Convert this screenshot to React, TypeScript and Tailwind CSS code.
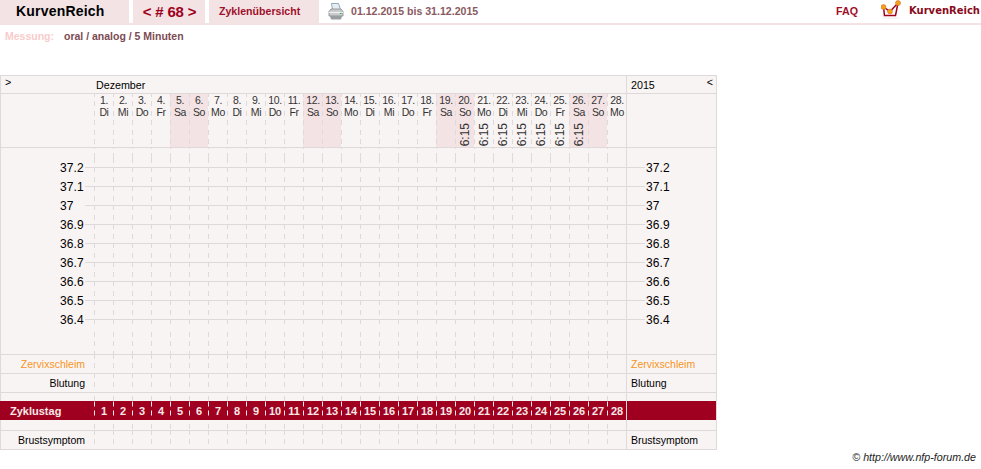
const DAYS = ['Di', 'Mi', 'Do', 'Fr', 'Sa', 'So', 'Mo']
const TEMPS = ['37.2', '37.1', '37', '36.9', '36.8', '36.7', '36.6', '36.5', '36.4']
const nums = Array.from({ length: 28 }, (_, i) => i + 1)

const isPink = (n: number) => n % 7 === 5 || n % 7 === 6 || n === 19 || n === 20
const hasTime = (n: number) => n >= 20 && n <= 26

const rowGrid = 'grid grid-cols-[94px_repeat(28,19px)_91px]'
const line = 'border-[#dedada]'
// 1px wide dash pattern, same length every 19px so the rows line up
const dash = 'bg-[linear-gradient(#dedada_5px,transparent_5px,transparent_9px,#dedada_9px,#dedada_14px,transparent_14px)] bg-[length:1px_19px] bg-repeat-y bg-left'
const dashLight = 'bg-[linear-gradient(#f8e8e8_5px,transparent_5px,transparent_9px,#f8e8e8_9px,#f8e8e8_14px,transparent_14px)] bg-[length:1px_19px] bg-repeat-y bg-left'

function DayCells() {
  return (
    <>
      {nums.map(n => <div key={n} className={dash} />)}
    </>
  )
}

function Spacer({ height }: { height: string }) {
  return (
    <div className={`${rowGrid} ${height}`}>
      <div />
      <DayCells />
      <div className={`border-l ${line}`} />
    </div>
  )
}

function SideRow({ label, color, height }: { label: string; color: string; height: string }) {
  return (
    <div className={`${rowGrid} ${height} text-[10.5px] leading-[18px] ${color}`}>
      <div className="pr-[9px] text-right">{label}</div>
      <DayCells />
      <div className={`border-l ${line} pl-[4px]`}>{label}</div>
    </div>
  )
}

function Divider() {
  return <div className={`border-b ${line}`} />
}

function TempRow({ t }: { t: string }) {
  return (
    <div className={`${rowGrid} h-[19px] items-stretch text-[12px] leading-[14px]`}>
      <div className="flex items-center pl-[60px]">
        <span className="w-[25px] pt-px tracking-[0.1px]">{t}</span>
        <span className="h-px flex-1 bg-[#dedada]" />
      </div>
      {nums.map(n => (
        <div key={n} className={`${dash} flex items-center`}>
          <span className="h-px flex-1 bg-[#dedada]" />
        </div>
      ))}
      <div className={`flex items-center border-l ${line}`}>
        <span className="h-px w-[18px] bg-[#dedada]" />
        <span className="ml-px pt-px tracking-[0.1px]">{t}</span>
      </div>
    </div>
  )
}

function Logo() {
  return (
    <svg width="24" height="20" viewBox="0 0 24 20" className="mr-[4px]">
      <path d="M2 12v6M8 17v2M14 17v2M2 18h16" fill="none" stroke="#eeeeee" strokeWidth="1" />
      <path d="M2.500 7 L3.500 15.500 H14.500 L17 3" fill="none" stroke="#a00020" strokeWidth="1.500" />
      <path d="M2.500 7 L9 11.500 L17 3" fill="none" stroke="#a00020" strokeWidth="1.500" />
      <circle cx="2.500" cy="7" r="2.500" fill="#f7a11a" stroke="#c8602a" strokeWidth="0.5" />
      <circle cx="9" cy="11.500" r="2.500" fill="#f7a11a" stroke="#c8602a" strokeWidth="0.5" />
      <circle cx="17" cy="3" r="2.500" fill="#f7a11a" stroke="#c8602a" strokeWidth="0.5" />
    </svg>
  )
}

function Printer() {
  return (
    <svg width="16" height="17" viewBox="0 0 16 17">
      <path d="M3.500 0.500h7l2 6h-8z" fill="#e6eef5" stroke="#7d95a8" strokeWidth="0.8" />
      <path d="M1 8.500l2-2.500h10l2 2.500v4.500H1z" fill="#c9cccf" stroke="#85888b" strokeWidth="0.8" />
      <path d="M1 9.500h14" stroke="#f2f2f2" strokeWidth="1" />
      <path d="M2 13h12l-1 3.500H3z" fill="#9a9da0" />
      <rect x="12" y="9.800" width="1.800" height="1" fill="#4caf50" />
    </svg>
  )
}

export default function App() {
  return (
    <div className="h-[469px] w-[981px] overflow-hidden bg-white font-['Liberation_Sans',Arial,sans-serif] text-[10.7px] leading-[13px] text-black">
      <header className="flex h-[25px] items-stretch border-b-2 border-[#f3e3e5]">
        <div className="flex w-[129px] items-center bg-[#f3e3e5] pl-[16px] text-[14px] font-bold tracking-[0.2px]">KurvenReich</div>
        <div className="ml-[4px] flex w-[72px] items-center justify-center bg-[#f3e3e5] pl-px text-[15px] font-bold tracking-[-0.2px] text-[#a00020]">&lt; # 68 &gt;</div>
        <div className="ml-[4px] flex w-[110px] items-center bg-[#f3e3e5] pl-[10px] text-[10.6px] font-bold text-[#a0102a]">Zyklenübersicht</div>
        <div className="ml-[9px] flex items-center gap-[7px]">
          <Printer />
          <span className="text-[10.6px] font-bold text-[#8a5a60]">01.12.2015 bis 31.12.2015</span>
        </div>
        <div className="ml-auto flex items-center">
          <a className="font-bold text-[#a0102a]">FAQ</a>
          <div className="ml-[23px] mr-px flex items-center pb-[3px]">
            <Logo />
            <span className="font-['DejaVu_Sans',sans-serif] text-[10px] font-bold text-[#8a0a20]">KurvenReich</span>
          </div>
        </div>
      </header>

      <div className="mt-[5px] flex h-[13px] pl-[5px] text-[10.5px] font-bold">
        <span className="text-[#f8cccc]">Messung:</span>
        <span className="ml-[10px] text-[#7d4a52]">oral / analog / 5 Minuten</span>
      </div>

      <div className={`mt-[32px] w-[717px] border ${line} bg-[#f9f4f4]`}>
        <div className="-ml-px">
          <div className={`${rowGrid} h-[18px] items-center border-b ${line}`}>
            <div className="pb-[4px] pl-[5px]">&gt;</div>
            <div className="col-span-28 pl-[2px] pt-px">Dezember</div>
            <div className={`flex h-full items-center justify-between border-l ${line} px-[4px]`}>
              <span className="pt-px">2015</span>
              <span className="pb-[4px]">&lt;</span>
            </div>
          </div>

          <div className={`${rowGrid} h-[54px] border-b ${line}`}>
            <div />
            {nums.map(n => (
              <div
                key={n}
                className={`${dash} flex flex-col items-center justify-between pb-px pl-px text-[#333333] ${isPink(n) ? 'bg-[#f3e3e5]' : ''}`}
              >
                <div className="text-center text-[10.5px] leading-[12px] tracking-[-0.4px]">
                  {n}.<br />
                  {DAYS[(n - 1) % 7]}
                </div>
                {hasTime(n) && <div className="rotate-180 text-[12px] leading-[12px] [writing-mode:vertical-rl]">6:15</div>}
              </div>
            ))}
            <div className={`border-l ${line}`} />
          </div>

          <Spacer height="h-[10px]" />
          {TEMPS.map(t => <TempRow key={t} t={t} />)}
          <Spacer height="h-[25px]" />
          <Divider />

          <SideRow label="Zervixschleim" color="text-[#f7941d]" height="h-[18px]" />
          <Divider />
          <SideRow label="Blutung" color="text-black" height="h-[18px]" />
          <Divider />
          <Spacer height="h-[8px]" />

          <div className={`${rowGrid} h-[19px] items-stretch bg-[#a00020] font-bold leading-[20px] text-[#f8e8e8]`}>
            <div className="pl-[10px] text-[11px]">Zyklustag</div>
            {nums.map(n => (
              <div key={n} className={`${dashLight} pl-px text-center text-[11px]`}>{n}</div>
            ))}
            <div className="border-l border-[#dddddd]" />
          </div>

          <Spacer height="h-[10px]" />
          <Divider />
          <SideRow label="Brustsymptom" color="text-black" height="h-[18px]" />
        </div>
      </div>

      <footer className="pr-[5px] text-right italic leading-[14px] text-[#222222]">© http://www.nfp-forum.de</footer>
    </div>
  )
}
